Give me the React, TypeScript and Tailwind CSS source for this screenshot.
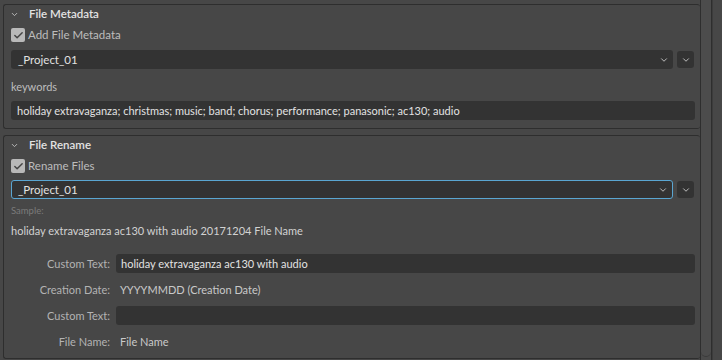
import { Check, ChevronDown } from 'lucide-react';

const font = { fontFamily: 'Lato, "Open Sans", sans-serif' };

function SectionHeader({ title }: { title: string }) {
  return (
    <div className="flex h-[18px] items-center">
      <ChevronDown className="ml-[6px] h-[9px] w-[9px] text-[#bdbdbd]" strokeWidth={2.5} />
      <span className="ml-[10px] text-[11.5px] leading-[16px] font-semibold text-[#e3e3e3]">{title}</span>
    </div>
  );
}

function CheckRow({ label }: { label: string }) {
  return (
    <div className="flex h-[14px] items-center pl-[7px]">
      <span className="flex h-[14px] w-[14px] items-center justify-center rounded-[2px] bg-[#b9b9b9]">
        <Check className="h-[11px] w-[11px] text-[#454545]" strokeWidth={3.2} />
      </span>
      <span className="ml-[3px] text-[11.5px] leading-[16px] text-[#bdbdbd]">{label}</span>
    </div>
  );
}

function Dropdown({ focused }: { focused?: boolean }) {
  return (
    <div className="flex items-center pl-[7px]">
      <div
        className={`flex h-[19px] w-[662px] items-center justify-between rounded-[3px] bg-[#333333] pr-[4px] ${
          focused ? 'border border-[#5aa6d2] pl-[6px]' : 'pl-[7px]'
        }`}
      >
        <span className="text-[11.5px] leading-[16px] text-[#e2e2e2]">_Project_01</span>
        <ChevronDown className="h-[10px] w-[10px] text-[#c8c8c8]" strokeWidth={2.2} />
      </div>
      <div className="ml-[4px] flex h-[17px] w-[17px] items-center justify-center rounded-[3px] bg-[#333333]">
        <ChevronDown className="h-[10px] w-[10px] text-[#c8c8c8]" strokeWidth={2.2} />
      </div>
    </div>
  );
}

function FieldRow({ label, value, input }: { label: string; value?: string; input?: boolean }) {
  return (
    <div className="flex h-[19px] items-center text-[11px] leading-[16px]">
      <span className="w-[106px] text-right text-[#b3b3b3]">{label}</span>
      {input ? (
        <div className="ml-[6px] flex h-[19px] w-[579px] items-center rounded-[3px] bg-[#333333] pl-[5px]">
          <span className="text-[#e2e2e2]">{value}</span>
        </div>
      ) : (
        <span className="ml-[10px] text-[#c9c9c9]">{value}</span>
      )}
    </div>
  );
}

export default function App() {
  return (
    <div className="flex h-[360px] w-[722px] overflow-hidden bg-[#474747]" style={font}>
      <div className="flex w-[700px] flex-col pl-[3px] pt-[4px]">
        <section className="flex h-[125px] flex-col rounded-[3px] border border-r-0 border-[#2e2e2e]">
          <SectionHeader title="File Metadata" />
          <div className="mt-[5px]">
            <CheckRow label="Add File Metadata" />
          </div>
          <div className="mt-[8px]">
            <Dropdown />
          </div>
          <div className="mt-[10px] pl-[7px] text-[11px] leading-[16px] text-[#bdbdbd]">keywords</div>
          <div className="mt-[6px] pl-[7px]">
            <div className="flex h-[19px] w-[684px] items-center rounded-[3px] bg-[#333333] pl-[6px]">
              <span className="text-[11px] leading-[16px] text-[#e2e2e2]">
                holiday extravaganza; christmas; music; band; chorus; performance; panasonic; ac130; audio
              </span>
            </div>
          </div>
        </section>
        <section className="mt-[6px] flex h-[224px] flex-col rounded-[3px] border border-r-0 border-[#2e2e2e]">
          <SectionHeader title="File Rename" />
          <div className="mt-[5px]">
            <CheckRow label="Rename Files" />
          </div>
          <div className="mt-[7px]">
            <Dropdown focused />
          </div>
          <div className="mt-[5px] pl-[7px] text-[9.5px] leading-[14px] text-[#7b7b7b]">Sample:</div>
          <div className="mt-[5px] pl-[7px] text-[11px] leading-[16px] text-[#d2d2d2]">
            holiday extravaganza ac130 with audio 20171204 File Name
          </div>
          <div className="mt-[15px] flex flex-col gap-[7px]">
            <FieldRow label="Custom Text:" value="holiday extravaganza ac130 with audio" input />
            <FieldRow label="Creation Date:" value="YYYYMMDD (Creation Date)" />
            <FieldRow label="Custom Text:" value="" input />
            <FieldRow label="File Name:" value="File Name" />
          </div>
        </section>
      </div>
      <div className="flex w-[12px] flex-col border-x border-[#2e2e2e] bg-[#4a4a4a]">
        <div className="mb-[3px] flex-1 rounded-b-[5px] border-b border-[#3a3a3a] bg-[#4c4c4c]" />
      </div>
      <div className="flex-1 border-l border-[#3c3c3c] bg-[#474747]" />
    </div>
  );
}
